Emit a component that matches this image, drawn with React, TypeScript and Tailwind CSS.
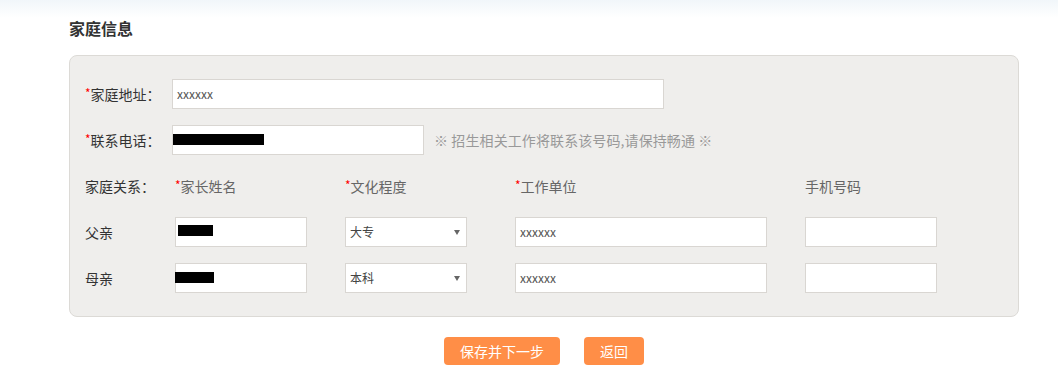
import React from "react";

const font = { fontFamily: '"SimSun","Noto Sans CJK SC","Liberation Sans",sans-serif' };

function Star() {
  return <span className="text-[12px] text-[#ff0000] relative top-[-2px]">*</span>;
}

function Box({ w, children, className = "" }: { w: string; children?: React.ReactNode; className?: string }) {
  return (
    <div className={`relative h-[30px] ${w} border border-[#d9d6d2] bg-white flex items-center pl-[4px] text-[12px] text-[#555] ${className}`}>
      {children}
    </div>
  );
}

function Redact({ className }: { className: string }) {
  return <div className={`absolute bg-black ${className}`} />;
}

function Select({ value }: { value: string }) {
  return (
    <Box w="w-[122px]">
      <span className="text-[12px] text-[#444]">{value}</span>
      <svg className="ml-auto mr-[6px]" width="6" height="5" viewBox="0 0 6 5">
        <path d="M0 0H6L3 5Z" fill="#666" />
      </svg>
    </Box>
  );
}

export default function App() {
  return (
    <div className="w-[1058px] h-[381px] bg-[linear-gradient(#f1f6fa_0px,#ffffff_18px)] pl-[69px] pt-[16px]" style={font}>
      <div className="h-6 leading-6 text-[16px] font-bold text-[#333]">家庭信息</div>
      <div className="mt-[15px] w-[950px] border border-[#dcdad6] rounded-[8px] bg-[#efeeec] pl-[15px] pt-[23px] pb-[23px] text-[14px] text-[#333]">
        <div className="flex items-center">
          <div className="w-[87px]"><Star />家庭地址：</div>
          <Box w="w-[492px]">xxxxxx</Box>
        </div>
        <div className="flex items-center mt-4">
          <div className="w-[87px]"><Star />联系电话：</div>
          <Box w="w-[252px]">
            <Redact className="left-0 top-[8px] w-[91px] h-[11px]" />
          </Box>
          <div className="ml-[10px] text-[#999] tracking-[0.1px]">※ 招生相关工作将联系该号码,请保持畅通 ※</div>
        </div>
        <div className="flex items-center h-[30px] mt-4">
          <div className="w-[90px]">家庭关系：</div>
          <div className="w-[170px] text-[#666]"><Star />家长姓名</div>
          <div className="w-[170px] text-[#666]"><Star />文化程度</div>
          <div className="w-[290px] text-[#666]"><Star />工作单位</div>
          <div className="text-[#666]">手机号码</div>
        </div>
        <div className="flex items-center mt-4">
          <div className="w-[90px]">父亲</div>
          <div className="w-[170px]">
            <Box w="w-[132px]">
              <Redact className="left-[2px] top-[7px] w-[35px] h-[11px]" />
            </Box>
          </div>
          <div className="w-[170px]"><Select value="大专" /></div>
          <div className="w-[290px]"><Box w="w-[252px]">xxxxxx</Box></div>
          <Box w="w-[132px]" />
        </div>
        <div className="flex items-center mt-4">
          <div className="w-[90px]">母亲</div>
          <div className="w-[170px]">
            <Box w="w-[132px]">
              <Redact className="left-[-1px] top-[8px] w-[39px] h-[11px]" />
            </Box>
          </div>
          <div className="w-[170px]"><Select value="本科" /></div>
          <div className="w-[290px]"><Box w="w-[252px]">xxxxxx</Box></div>
          <Box w="w-[132px]" />
        </div>
      </div>
      <div className="w-[950px] mt-[20px] flex justify-center gap-[24px]">
        <button className="w-[116px] h-[28px] rounded-[4px] bg-[#ff8e47] text-white text-[14px]">保存并下一步</button>
        <button className="w-[60px] h-[28px] rounded-[4px] bg-[#ff8e47] text-white text-[14px]">返回</button>
      </div>
    </div>
  );
}
